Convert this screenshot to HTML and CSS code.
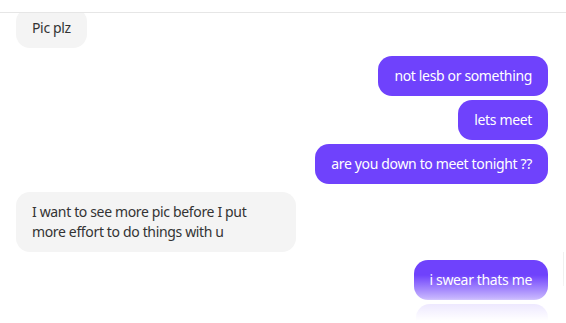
FILE: index.html
```html
<!DOCTYPE html>
<html>
<head>
<meta charset="utf-8">
<link rel="stylesheet" href="styles.css">
</head>
<body>
<div class="chat">
  <div class="chat-header"></div>
  <div class="messages">
    <div class="group in">
      <div class="bubble">Pic plz</div>
    </div>
    <div class="group out">
      <div class="bubble">not lesb or something</div>
      <div class="bubble">lets meet</div>
      <div class="bubble">are you down to meet tonight ??</div>
    </div>
    <div class="group in">
      <div class="bubble">I want to see more pic before I put more effort to do things with u</div>
    </div>
    <div class="group out">
      <div class="bubble">i swear thats me</div>
      <div class="bubble bubble-hidden"></div>
    </div>
  </div>
  <div class="fade"></div>
  <div class="scroll-edge"></div>
</div>
</body>
</html>
```
FILE: styles.css
```css
* { box-sizing: border-box; }
html, body {
  margin: 0;
  padding: 0;
  background: #fff;
}
body {
  font-family: "Noto Sans", "Open Sans", sans-serif;
  font-size: 14px;
  letter-spacing: -0.35px;
  color: #333;
}
.chat {
  position: relative;
  width: 566px;
  height: 323px;
  overflow: hidden;
}
.chat-header {
  position: absolute;
  top: 0;
  left: 0;
  right: 0;
  height: 13px;
  background: #fff;
  border-bottom: 1px solid #e6e6e6;
  z-index: 2;
}
.messages {
  display: flex;
  flex-direction: column;
  gap: 8px;
  padding: 8px 18px 0 16px;
}
.group {
  display: flex;
  flex-direction: column;
  gap: 4px;
}
.group.in { align-items: flex-start; }
.group.out { align-items: flex-end; }
.bubble {
  max-width: 280px;
  padding: 10px 16px;
  line-height: 20px;
  border-radius: 14px;
}
.bubble-hidden {
  width: 132px;
  height: 40px;
}
.in .bubble {
  background: #f4f4f4;
  color: #333;
}
.out .bubble {
  background: #6f42fc;
  color: #fff;
}
.fade {
  position: absolute;
  left: 0;
  right: 0;
  bottom: 0;
  height: 48px;
  background: linear-gradient(to bottom, rgba(255,255,255,0) 0%, rgba(255,255,255,0.6) 48%, rgba(255,255,255,0.88) 60%, #fff 95%);
  z-index: 1;
}
.scroll-edge {
  position: absolute;
  right: 2px;
  top: 252px;
  width: 1px;
  height: 34px;
  background: #f0f0f0;
}
```
